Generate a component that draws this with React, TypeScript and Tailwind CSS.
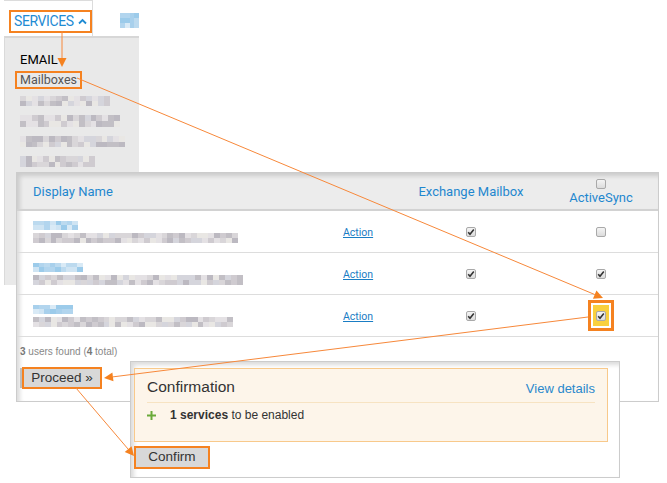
import React from 'react';

const BLUE = ['#a8d0ec', '#bcdaef', '#cfe4f3', '#9ccbea', '#d9eaf6', '#b2d5ee'];
const GRAY = ['#cfcbd0', '#c2bfc5', '#d9d6d9', '#e4e1e4', '#bcb9c1', '#d5d5dc', '#e9e7e4'];

function rand(seed: number) {
  let s = seed;
  return () => {
    s = (s * 9301 + 49297) % 233280;
    return s / 233280;
  };
}

function Mosaic({ w, h, seed, blue, cell = 6 }: { w: number; h: number; seed: number; blue?: boolean; cell?: number }) {
  const r = rand(seed);
  const pal = blue ? BLUE : GRAY;
  const cols = Math.ceil(w / cell);
  const rows = Math.ceil(h / cell);
  const cells = [];
  for (let i = 0; i < rows * cols; i++) cells.push(pal[Math.floor(r() * pal.length)]);
  return (
    <div className="flex flex-wrap overflow-hidden" style={{ width: w, height: h }}>
      {cells.map((c, i) => (
        <div key={i} style={{ width: w / cols, height: h / rows, background: c }} />
      ))}
    </div>
  );
}

function Check({ on }: { on?: boolean }) {
  return (
    <span className="inline-flex w-[10px] h-[10px] items-center justify-center rounded-[2px] border border-[#a9a9a9] bg-gradient-to-b from-[#f4f4f4] to-[#dcdcdc]">
      {on && (
        <svg width="8" height="8" viewBox="0 0 8 8">
          <path d="M1.2 4.2 L3 6.2 L6.8 1.6" fill="none" stroke="#333" strokeWidth="1.6" />
        </svg>
      )}
    </span>
  );
}

function Arrow({ x1, y1, x2, y2 }: { x1: number; y1: number; x2: number; y2: number }) {
  const dx = x2 - x1;
  const dy = y2 - y1;
  const len = Math.hypot(dx, dy);
  const ux = dx / len;
  const uy = dy / len;
  const bx = x2 - ux * 9;
  const by = y2 - uy * 9;
  const px = -uy * 4.5;
  const py = ux * 4.5;
  return (
    <g>
      <line x1={x1} y1={y1} x2={bx} y2={by} stroke="#f7883a" strokeWidth="1" />
      <polygon points={`${x2},${y2} ${bx + px},${by + py} ${bx - px},${by - py}`} fill="#f58220" />
    </g>
  );
}

const rows = [
  { n: 45, m: 205, seed: 3, ex: true, as: false },
  { n: 50, m: 210, seed: 11, ex: true, as: true },
  { n: 40, m: 200, seed: 23, ex: true, as: true, hl: true },
];

export default function App() {
  return (
    <div className="relative w-[667px] h-[483px] bg-white overflow-hidden font-['Roboto',sans-serif]">
      {/* menu */}
      <div className="relative w-[135px] ml-[4px]">
        <div className="flex h-[36px]">
          <div className="w-[89px] border-t border-r border-[#dcdcdc] pt-[8px] pl-[5px]">
            <span className="inline-flex items-center gap-[4px] border-2 border-[#f58220] px-[3px] h-[23px] text-[14px] text-[#1f8bd3] tracking-[-0.4px]">
              SERVICES
              <svg width="9" height="7" viewBox="0 0 9 7">
                <path d="M1 5.5 L4.5 2 L8 5.5" fill="none" stroke="#1f8bd3" strokeWidth="1.8" />
              </svg>
            </span>
          </div>
          <div className="flex-1 flex items-start justify-end pt-[13px]">
            <Mosaic w={19} h={15} seed={41} blue cell={5} />
          </div>
        </div>
        <div className="h-[249px] bg-[#e9e9e9] border-l border-[#dadada] border-t-2 border-t-[#d7d7d7] pl-[15px] pt-[14px]">
          <div className="text-[13px] text-black leading-[15px]">EMAIL</div>
          <div className="-ml-[5px] mt-[1px] inline-block border-2 border-[#f58220] px-[3px] text-[12.5px] leading-[14px] text-[#555]">
            Mailboxes
          </div>
          <div className="flex flex-col gap-[9px] mt-[5px]">
            <Mosaic w={90} h={10} seed={5} />
            <Mosaic w={100} h={12} seed={7} />
            <Mosaic w={105} h={11} seed={9} />
            <Mosaic w={75} h={11} seed={13} />
          </div>
        </div>
      </div>

      {/* table panel */}
      <div className="relative mt-[-113px] ml-[16px] w-[643px] h-[230px] bg-white border border-[#cccccc] shadow-[inset_3px_3px_4px_rgba(0,0,0,0.14)]">
        <div className="h-[38px] bg-[#ececec] border-b-2 border-[#d2d2d2] flex items-center text-[13px] text-[#1f87cf] shadow-[inset_3px_3px_4px_rgba(0,0,0,0.14)] whitespace-nowrap">
          <div className="w-[318px] pl-[16px] pt-[2px]">Display Name</div>
          <div className="w-[90px]" />
          <div className="w-[92px] flex justify-center pt-[2px]">Exchange Mailbox</div>
          <div className="w-[27px]" />
          <div className="w-[114px] flex flex-col items-center pt-[2px] leading-[15px]">
            <Check />
            <span className="mt-[1px]">ActiveSync</span>
          </div>
        </div>
        {rows.map((r, i) => (
          <div key={i} className="h-[42px] border-b border-[#dddddd] flex items-center">
            <div className="w-[318px] pl-[16px] flex flex-col gap-[3px]">
              <Mosaic w={r.n} h={9} seed={r.seed} blue />
              <Mosaic w={r.m} h={10} seed={r.seed + 1} />
            </div>
            <div className="w-[90px] pl-[8px] text-[10.5px] text-[#1a7dc4] underline pt-[2px]">Action</div>
            <div className="w-[92px] flex justify-center">
              <Check on={r.ex} />
            </div>
            <div className="w-[27px]" />
            <div className="w-[114px] flex justify-center">
              {r.hl ? (
                <span className="border-[3px] border-[#f58220] p-[2px] bg-white">
                  <span className="flex w-[16px] h-[21px] items-center justify-center bg-[#f9d03e]">
                    <Check on />
                  </span>
                </span>
              ) : (
                <Check on={r.as} />
              )}
            </div>
          </div>
        ))}
        <div className="pl-[3px] pt-[7px] text-[10px] text-[#888] font-['Liberation_Sans',sans-serif]">
          <b className="text-[#777]">3</b> users found (<b className="text-[#777]">4</b> total)
        </div>
        <div className="mt-[8px] ml-[3px] flex">
          <span className="w-[2px] h-[20px] my-[1px] bg-[#bdbdbd]" />
          <span className="h-[22px] w-[80px] border-2 border-[#f58220] bg-[#d8d8d8] flex items-center justify-center text-[13.5px] text-[#333] font-['Liberation_Sans',sans-serif]">
            Proceed »
          </span>
        </div>
      </div>

      {/* confirmation panel */}
      <div className="relative mt-[-41px] ml-[130px] w-[490px] h-[117px] bg-white border border-[#cccccc] shadow-[inset_3px_3px_4px_rgba(0,0,0,0.14)] pl-[3px] pt-[6px] font-['Liberation_Sans',sans-serif]">
        <div className="w-[474px] h-[74px] bg-[#fdf5ea] border border-[#f8c98b] px-[12px]">
          <div className="flex items-end justify-between h-[34px] pb-[4px] border-b border-[#f7e3c2]">
            <span className="text-[15.5px] text-[#333]">Confirmation</span>
            <span className="text-[13px] text-[#2a88cc]">View details</span>
          </div>
          <div className="flex items-center h-[24px] text-[12px] text-[#333]">
            <svg width="9" height="9" viewBox="0 0 9 9" className="mr-[14px]">
              <path d="M4.5 0 V9 M0 4.5 H9" stroke="#6aaa3a" strokeWidth="2" />
            </svg>
            <span>
              <b>1 services</b> to be enabled
            </span>
          </div>
        </div>
        <div className="mt-[4px] h-[23px] w-[76px] border-2 border-[#f58220] bg-[#d8d8d8] flex items-center justify-center text-[13.5px] text-[#333]">
          Confirm
        </div>
      </div>

      <svg className="absolute inset-0 pointer-events-none" width="667" height="483">
        <Arrow x1={62} y1={31} x2={62} y2={67} />
        <Arrow x1={77} y1={78} x2={603} y2={298} />
        <Arrow x1={588} y1={317} x2={104} y2={378} />
        <Arrow x1={76} y1={388} x2={134} y2={456} />
      </svg>
    </div>
  );
}
